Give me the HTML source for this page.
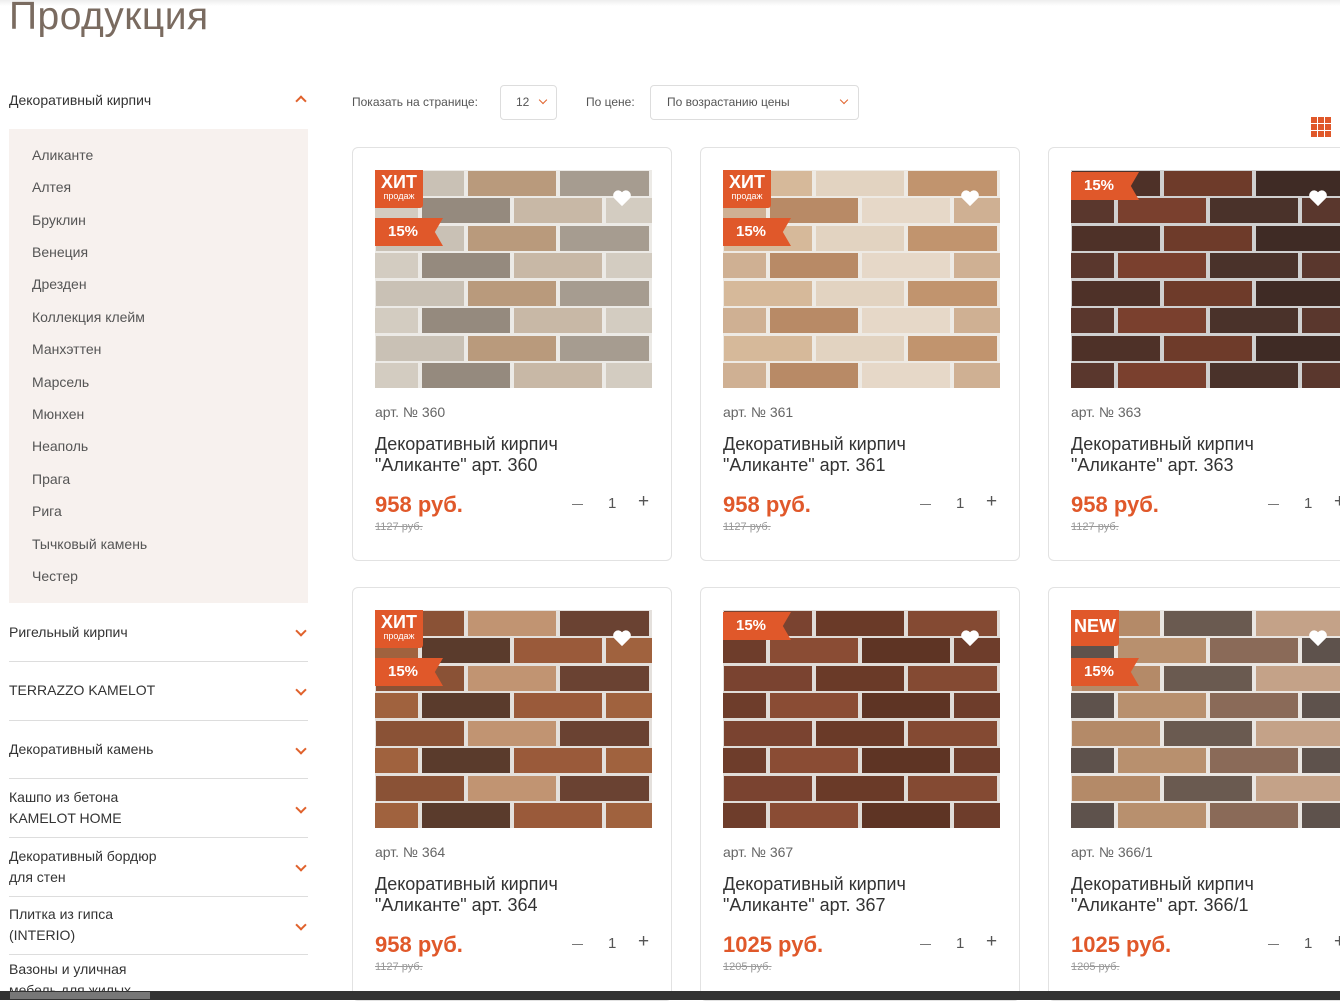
<!DOCTYPE html>
<html><head><meta charset="utf-8">
<style>
*{margin:0;padding:0;box-sizing:border-box}
body{width:1340px;height:1000px;overflow:hidden;background:#fff;font-family:"Liberation Sans","DejaVu Sans",sans-serif;color:#333;position:relative}
.a{position:absolute;white-space:nowrap}
h1{position:absolute;left:9px;top:-5px;font-weight:400;font-size:39px;color:#7a6b60;letter-spacing:0.5px}
.cat{font-size:14px;color:#333;line-height:21px}
.sub{position:absolute;left:9px;top:129px;width:299px;height:474px;background:#f7f1ee}
.sub div{position:absolute;left:23px;font-size:14px;color:#555}
.hr{position:absolute;left:9px;width:299px;height:1px;background:#ddd}
.chev{position:absolute;width:8px;height:8px;border-right:2px solid #e0622c;border-bottom:2px solid #e0622c;transform:rotate(45deg)}
.card{position:absolute;width:320px;height:414px;border:1px solid #e2e2e2;border-radius:6px;background:#fff}
.img{position:absolute;left:22px;top:22px;width:277px;height:218px;overflow:hidden}
.hit{position:absolute;left:0;top:0;width:48px;height:38px;background:#e0582a;color:#fff;font-weight:700;text-align:center;font-size:18px;line-height:20px;padding-top:2px;border-bottom-right-radius:3px}
.hit small{display:block;font-size:9px;line-height:9px;font-weight:400}
.rib{position:absolute;left:0;width:68px;height:28px;background:#e0582a;color:#fff;font-weight:700;font-size:15px;line-height:28px;padding-left:13px;clip-path:polygon(0 0,100% 0,88% 50%,100% 100%,0 100%)}
.heart{position:absolute;left:237px;top:19px}
.art{position:absolute;left:22px;top:256px;font-size:14px;color:#666}
.tit{position:absolute;left:22px;top:286px;font-size:18px;line-height:21px;color:#333}
.pr{position:absolute;left:22px;top:344px;font-size:22px;font-weight:700;color:#e0582a}
.old{position:absolute;left:22px;top:373px;font-size:11px;color:#999;text-decoration:line-through}
.q{position:absolute;top:347px;font-size:15px;color:#555}
.m{position:absolute;top:356px;width:11px;height:1px;background:#777}
</style></head><body>
<div style="position:absolute;left:0;top:0;width:1340px;height:6px;background:linear-gradient(#eee,#fff)"></div>
<h1>Продукция</h1>

<div class="a cat" style="left:9px;top:90px">Декоративный кирпич</div>
<div class="chev" style="left:297px;top:97px;transform:rotate(225deg)"></div>
<div class="sub">
<div style="top:18px">Аликанте</div><div style="top:50px">Алтея</div><div style="top:83px">Бруклин</div><div style="top:115px">Венеция</div><div style="top:147px">Дрезден</div><div style="top:180px">Коллекция клейм</div><div style="top:212px">Манхэттен</div><div style="top:245px">Марсель</div><div style="top:277px">Мюнхен</div><div style="top:309px">Неаполь</div><div style="top:342px">Прага</div><div style="top:374px">Рига</div><div style="top:407px">Тычковый камень</div><div style="top:439px">Честер</div>
</div>
<div class="a cat" style="left:9px;top:622px">Ригельный кирпич</div><div class="chev" style="left:297px;top:627px"></div>
<div class="hr" style="top:661px"></div>
<div class="a cat" style="left:9px;top:680px">TERRAZZO KAMELOT</div><div class="chev" style="left:297px;top:686px"></div>
<div class="hr" style="top:720px"></div>
<div class="a cat" style="left:9px;top:739px">Декоративный камень</div><div class="chev" style="left:297px;top:745px"></div>
<div class="hr" style="top:778px"></div>
<div class="a cat" style="left:9px;top:787px">Кашпо из бетона<br>KAMELOT HOME</div><div class="chev" style="left:297px;top:804px"></div>
<div class="hr" style="top:837px"></div>
<div class="a cat" style="left:9px;top:846px">Декоративный бордюр<br>для стен</div><div class="chev" style="left:297px;top:862px"></div>
<div class="hr" style="top:896px"></div>
<div class="a cat" style="left:9px;top:904px">Плитка из гипса<br>(INTERIO)</div><div class="chev" style="left:297px;top:921px"></div>
<div class="hr" style="top:954px"></div>
<div class="a cat" style="left:9px;top:959px">Вазоны и уличная<br>мебель для жилых</div>

<div class="a" style="left:352px;top:95px;font-size:12px;color:#555">Показать на странице:</div>
<div style="position:absolute;left:500px;top:85px;width:57px;height:35px;border:1px solid #ddd;border-radius:4px"></div>
<div class="a" style="left:516px;top:95px;font-size:12px;color:#555">12</div>
<div class="chev" style="left:540px;top:97px;width:6px;height:6px;border-width:1.5px"></div>
<div class="a" style="left:586px;top:95px;font-size:12px;color:#555">По цене:</div>
<div style="position:absolute;left:650px;top:85px;width:209px;height:35px;border:1px solid #ddd;border-radius:4px"></div>
<div class="a" style="left:667px;top:95px;font-size:12px;color:#555">По возрастанию цены</div>
<div class="chev" style="left:841px;top:97px;width:6px;height:6px;border-width:1.5px"></div>
<svg class="a" style="left:1311px;top:117px" width="21" height="21"><g fill="#e0582a"><rect x="0" y="0" width="6" height="6"/><rect x="7" y="0" width="6" height="6"/><rect x="14" y="0" width="6" height="6"/><rect x="0" y="7" width="6" height="6"/><rect x="7" y="7" width="6" height="6"/><rect x="14" y="7" width="6" height="6"/><rect x="0" y="14" width="6" height="6"/><rect x="7" y="14" width="6" height="6"/><rect x="14" y="14" width="6" height="6"/></g></svg>

<svg width="0" height="0" style="position:absolute"><defs>
<pattern id="p1" width="276" height="55" patternUnits="userSpaceOnUse"><rect width="276" height="55" fill="#eceae6"/><rect x="1" y="1" width="88" height="25" fill="#c9c1b5"/><rect x="93" y="1" width="88" height="25" fill="#b99a7c"/><rect x="185" y="1" width="89" height="25" fill="#a69c90"/><rect x="-45" y="28" width="88" height="25" fill="#d3ccc1"/><rect x="231" y="28" width="88" height="25" fill="#d3ccc1"/><rect x="47" y="28" width="88" height="25" fill="#958a7e"/><rect x="139" y="28" width="88" height="25" fill="#c8b8a6"/></pattern>
<pattern id="p2" width="276" height="55" patternUnits="userSpaceOnUse"><rect width="276" height="55" fill="#eeeae4"/><rect x="1" y="1" width="88" height="25" fill="#d6b99a"/><rect x="93" y="1" width="88" height="25" fill="#e2d3c1"/><rect x="185" y="1" width="89" height="25" fill="#c1946e"/><rect x="-45" y="28" width="88" height="25" fill="#cfb093"/><rect x="231" y="28" width="88" height="25" fill="#cfb093"/><rect x="47" y="28" width="88" height="25" fill="#b88a66"/><rect x="139" y="28" width="88" height="25" fill="#e6d8c8"/></pattern>
<pattern id="p3" width="276" height="55" patternUnits="userSpaceOnUse"><rect width="276" height="55" fill="#d0d0d0"/><rect x="1" y="1" width="88" height="25" fill="#4e3128"/><rect x="93" y="1" width="88" height="25" fill="#6e3b2a"/><rect x="185" y="1" width="89" height="25" fill="#3f2b25"/><rect x="-45" y="28" width="88" height="25" fill="#5a372d"/><rect x="231" y="28" width="88" height="25" fill="#5a372d"/><rect x="47" y="28" width="88" height="25" fill="#7a402e"/><rect x="139" y="28" width="88" height="25" fill="#4a322a"/></pattern>
<pattern id="p4" width="276" height="55" patternUnits="userSpaceOnUse"><rect width="276" height="55" fill="#e4e0dc"/><rect x="1" y="1" width="88" height="25" fill="#8a5236"/><rect x="93" y="1" width="88" height="25" fill="#c19472"/><rect x="185" y="1" width="89" height="25" fill="#6a4232"/><rect x="-45" y="28" width="88" height="25" fill="#a0623e"/><rect x="231" y="28" width="88" height="25" fill="#a0623e"/><rect x="47" y="28" width="88" height="25" fill="#5a3b2c"/><rect x="139" y="28" width="88" height="25" fill="#9a5a3a"/></pattern>
<pattern id="p5" width="276" height="55" patternUnits="userSpaceOnUse"><rect width="276" height="55" fill="#e0dcd8"/><rect x="1" y="1" width="88" height="25" fill="#7a4330"/><rect x="93" y="1" width="88" height="25" fill="#6a3a28"/><rect x="185" y="1" width="89" height="25" fill="#844a33"/><rect x="-45" y="28" width="88" height="25" fill="#6e3d2b"/><rect x="231" y="28" width="88" height="25" fill="#6e3d2b"/><rect x="47" y="28" width="88" height="25" fill="#8a4c34"/><rect x="139" y="28" width="88" height="25" fill="#5e3424"/></pattern>
<pattern id="p6" width="276" height="55" patternUnits="userSpaceOnUse"><rect width="276" height="55" fill="#eae6e2"/><rect x="1" y="1" width="88" height="25" fill="#b48a68"/><rect x="93" y="1" width="88" height="25" fill="#6a5a50"/><rect x="185" y="1" width="89" height="25" fill="#c4a288"/><rect x="-45" y="28" width="88" height="25" fill="#5e524c"/><rect x="231" y="28" width="88" height="25" fill="#5e524c"/><rect x="47" y="28" width="88" height="25" fill="#b8906e"/><rect x="139" y="28" width="88" height="25" fill="#8a6a58"/></pattern>
<symbol id="ht" viewBox="0 0 24 22"><path d="M12 21 L2.5 11.5 A5.5 5.5 0 0 1 12 4 A5.5 5.5 0 0 1 21.5 11.5 Z" fill="#fff"/></symbol>
</defs></svg>

<div class="card" style="left:352px;top:147px">
<div class="img"><svg width="277" height="218"><rect width="277" height="218" fill="url(#p1)"/></svg>
<div class="hit">ХИТ<small>продаж</small></div><div class="rib" style="top:48px">15%</div><svg class="heart" width="20" height="18"><use href="#ht"/></svg></div>
<div class="art">арт. № 360</div><div class="tit">Декоративный кирпич<br>"Аликанте" арт. 360</div>
<div class="pr">958 руб.</div><div class="old">1127 руб.</div>
<div class="m" style="left:219px"></div><div class="q" style="left:255px">1</div><div class="q" style="left:285px;font-size:19px;top:343px">+</div></div>

<div class="card" style="left:700px;top:147px">
<div class="img"><svg width="277" height="218"><rect width="277" height="218" fill="url(#p2)"/></svg>
<div class="hit">ХИТ<small>продаж</small></div><div class="rib" style="top:48px">15%</div><svg class="heart" width="20" height="18"><use href="#ht"/></svg></div>
<div class="art">арт. № 361</div><div class="tit">Декоративный кирпич<br>"Аликанте" арт. 361</div>
<div class="pr">958 руб.</div><div class="old">1127 руб.</div>
<div class="m" style="left:219px"></div><div class="q" style="left:255px">1</div><div class="q" style="left:285px;font-size:19px;top:343px">+</div></div>

<div class="card" style="left:1048px;top:147px">
<div class="img"><svg width="277" height="218"><rect width="277" height="218" fill="url(#p3)"/></svg>
<div class="rib" style="top:2px">15%</div><svg class="heart" width="20" height="18"><use href="#ht"/></svg></div>
<div class="art">арт. № 363</div><div class="tit">Декоративный кирпич<br>"Аликанте" арт. 363</div>
<div class="pr">958 руб.</div><div class="old">1127 руб.</div>
<div class="m" style="left:219px"></div><div class="q" style="left:255px">1</div><div class="q" style="left:285px;font-size:19px;top:343px">+</div></div>

<div class="card" style="left:352px;top:587px">
<div class="img"><svg width="277" height="218"><rect width="277" height="218" fill="url(#p4)"/></svg>
<div class="hit">ХИТ<small>продаж</small></div><div class="rib" style="top:48px">15%</div><svg class="heart" width="20" height="18"><use href="#ht"/></svg></div>
<div class="art">арт. № 364</div><div class="tit">Декоративный кирпич<br>"Аликанте" арт. 364</div>
<div class="pr">958 руб.</div><div class="old">1127 руб.</div>
<div class="m" style="left:219px"></div><div class="q" style="left:255px">1</div><div class="q" style="left:285px;font-size:19px;top:343px">+</div></div>

<div class="card" style="left:700px;top:587px">
<div class="img"><svg width="277" height="218"><rect width="277" height="218" fill="url(#p5)"/></svg>
<div class="rib" style="top:2px">15%</div><svg class="heart" width="20" height="18"><use href="#ht"/></svg></div>
<div class="art">арт. № 367</div><div class="tit">Декоративный кирпич<br>"Аликанте" арт. 367</div>
<div class="pr">1025 руб.</div><div class="old">1205 руб.</div>
<div class="m" style="left:219px"></div><div class="q" style="left:255px">1</div><div class="q" style="left:285px;font-size:19px;top:343px">+</div></div>

<div class="card" style="left:1048px;top:587px">
<div class="img"><svg width="277" height="218"><rect width="277" height="218" fill="url(#p6)"/></svg>
<div class="hit" style="height:36px;line-height:32px;padding-top:0">NEW</div><div class="rib" style="top:48px">15%</div><svg class="heart" width="20" height="18"><use href="#ht"/></svg></div>
<div class="art">арт. № 366/1</div><div class="tit">Декоративный кирпич<br>"Аликанте" арт. 366/1</div>
<div class="pr">1025 руб.</div><div class="old">1205 руб.</div>
<div class="m" style="left:219px"></div><div class="q" style="left:255px">1</div><div class="q" style="left:285px;font-size:19px;top:343px">+</div></div>
<div style="position:absolute;left:0;top:991px;width:1340px;height:9px;background:#333"></div>
<div style="position:absolute;left:10px;top:992px;width:140px;height:7px;background:#777"></div>
</body></html>
